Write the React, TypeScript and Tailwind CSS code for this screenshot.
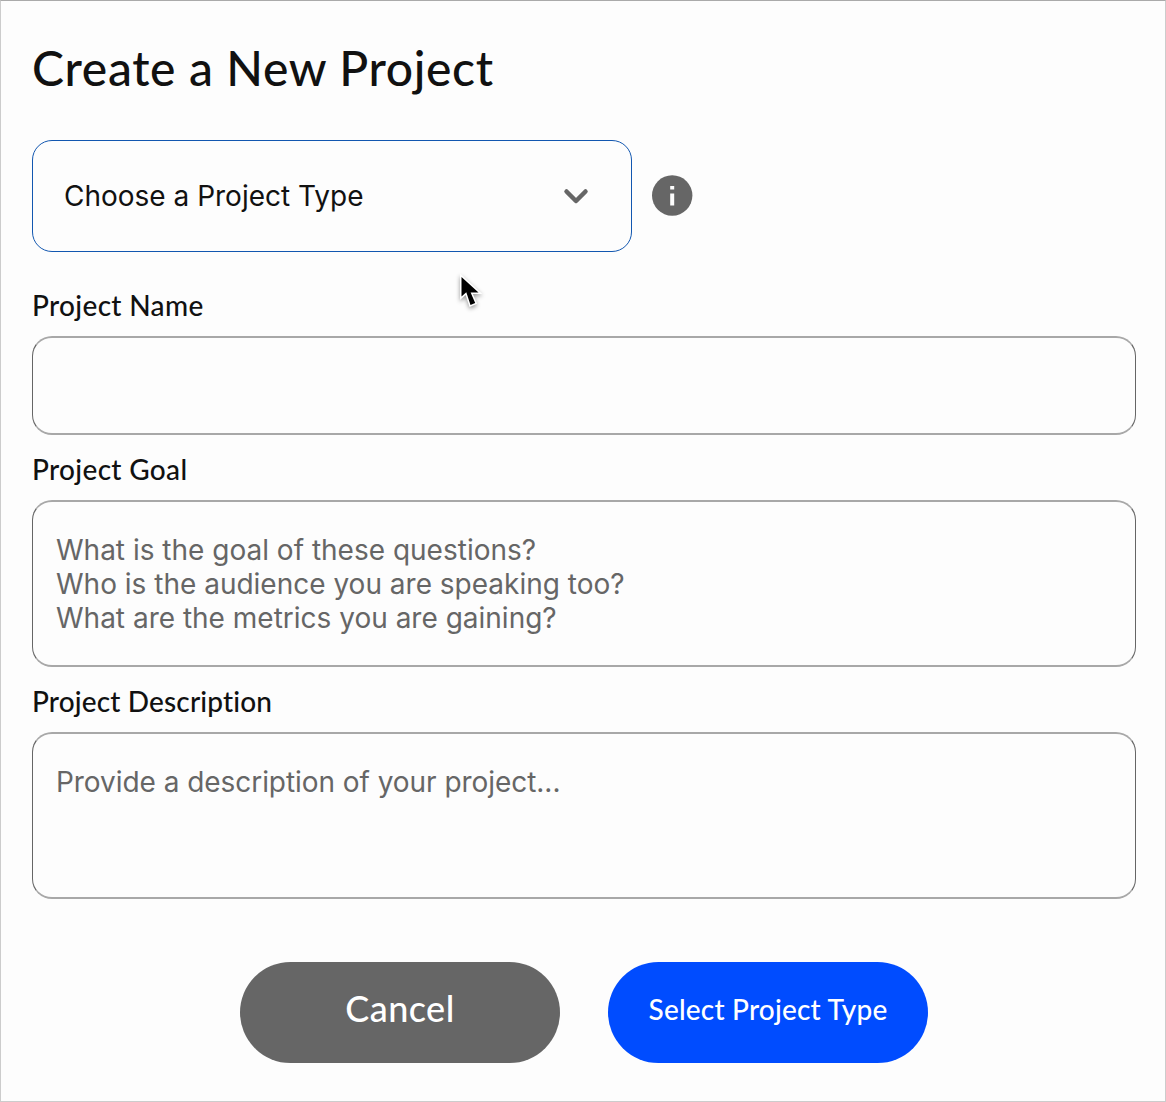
import type { ReactNode } from "react";

const inputStyles =
  "block w-full resize-none rounded-[20px] border-x border-y-2 border-x-[#666666] border-y-[#a8a8a8] bg-transparent px-[23px] font-['Inter',sans-serif] text-[28px] leading-[34px] text-[#666666] outline-none placeholder:text-[#666666] placeholder:opacity-100";

function Field({ id, label, labelClass, children }: { id: string; label: string; labelClass: string; children: ReactNode }) {
  return (
    <div className="flex flex-col gap-[15px]">
      <label htmlFor={id} className={`pt-px text-[28px] leading-8 font-medium whitespace-nowrap text-[#111111] ${labelClass}`}>
        {label}
      </label>
      {children}
    </div>
  );
}

function ProjectTypeSelect() {
  return (
    <div className="flex items-center gap-5">
      <button
        type="button"
        className="flex h-28 w-[600px] items-center justify-between rounded-[20px] border border-[#1257b0] pr-[41px] pl-[31px] font-['Inter',sans-serif] text-[28px] leading-[34px] text-[#111111]"
      >
        <span>Choose a Project Type</span>
        <svg width="28" height="20" viewBox="0 0 28 20" fill="none" aria-hidden="true">
          <path d="M4.5 5.5 14 15l9.5-9.5" stroke="#666666" strokeWidth="4.5" strokeLinecap="round" strokeLinejoin="round" />
        </svg>
      </button>
      <svg className="mb-px" width="41" height="41" viewBox="0 0 41 41" aria-label="About project types">
        <circle cx="20.2" cy="20.5" r="20.2" fill="#666666" />
        <path d="M18.2 11h4v3.500h-4zM18.200 18.500h4v12h-4z" fill="#fdfdfd" />
      </svg>
    </div>
  );
}

function Pointer() {
  return (
    <svg className="absolute top-[267px] left-[452px]" width="36" height="48" viewBox="0 0 36 48" aria-hidden="true">
      <path
        d="M8.5 9v19.6l4.800-4.300 4.200 12.700 4.700-2-4.600-10.500h7.900z"
        fill="#000000"
        stroke="#ffffff"
        strokeWidth="3"
        paintOrder="stroke"
        className="drop-shadow-[0_2px_2px_rgba(0,0,0,0.4)]"
      />
    </svg>
  );
}

export default function App() {
  return (
    <main className="relative h-[1102px] w-[1166px] overflow-hidden border border-[#cccccc] border-t-[#aaaaaa] bg-[#fdfdfd] px-[31px] pt-[35px] font-['Lato',sans-serif]">
      <h1 className="text-[48px] leading-[64px] font-medium tracking-[0.65px] whitespace-nowrap text-[#111111]">
        Create a New Project
      </h1>

      <form className="mt-10 w-[1104px]">
        <ProjectTypeSelect />

        <div className="mt-9 flex flex-col gap-[17px]">
          <Field id="name" label="Project Name" labelClass="tracking-[0.33px]">
            <input id="name" className={`${inputStyles} h-[99px]`} />
          </Field>
          <Field id="goal" label="Project Goal" labelClass="tracking-[0.33px]">
            <textarea
              id="goal"
              className={`${inputStyles} h-[167px] pt-[31px]`}
              placeholder={"What is the goal of these questions?\nWho is the audience you are speaking too?\nWhat are the metrics you are gaining?"}
            />
          </Field>
          <Field id="description" label="Project Description" labelClass="tracking-[0.15px]">
            <textarea
              id="description"
              className={`${inputStyles} h-[167px] pt-[31px] tracking-[-0.05px]`}
              placeholder="Provide a description of your project..."
            />
          </Field>
        </div>

        <div className="mt-[63px] flex justify-center gap-12 font-medium text-white">
          <button type="button" className="h-[101px] w-80 rounded-full bg-[#666666] pb-[10px] text-[36px] tracking-[0.45px]">
            Cancel
          </button>
          <button type="button" className="h-[101px] w-80 rounded-full bg-[#004cff] pb-2 text-[28px] tracking-[0.2px] whitespace-nowrap">
            Select Project Type
          </button>
        </div>
      </form>

      <Pointer />
    </main>
  );
}
